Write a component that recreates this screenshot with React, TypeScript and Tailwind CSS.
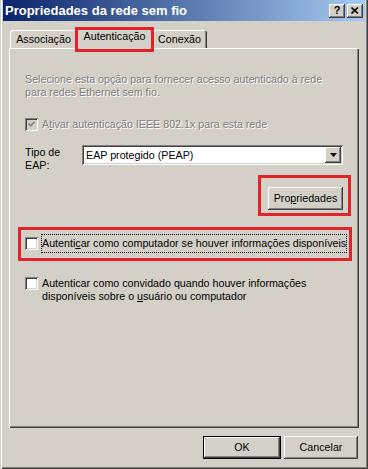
import React from 'react';

const raised =
  'shadow-[inset_-1px_-1px_#404040,inset_1px_1px_#ffffff,inset_-2px_-2px_#808080]';
const sunken =
  'shadow-[inset_1px_1px_#808080,inset_-1px_-1px_#ffffff,inset_2px_2px_#404040,inset_-2px_-2px_#d4d0c8]';
const disabledText = 'text-[#808080] [text-shadow:1px_1px_0_#ffffff]';

const Check: React.FC<{ checked?: boolean; disabled?: boolean }> = ({ checked, disabled }) => (
  <span
    className={`w-[13px] h-[13px] shrink-0 flex items-center justify-center ${sunken} ${
      disabled ? 'bg-[#d4d0c8]' : 'bg-white'
    }`}
  >
    {checked && (
      <svg width="7" height="7" viewBox="0 0 7 7">
        <path d="M0.5 2.5 L2.7 4.8 L6.6 0.8" stroke={disabled ? '#808080' : '#000'} strokeWidth="1.7" fill="none" />
      </svg>
    )}
  </span>
);

const Annotation: React.FC<{ className: string }> = ({ className }) => (
  <span className={`absolute border-[3px] border-[#e1222b] pointer-events-none ${className}`} />
);

export default function App() {
  return (
    <div className="w-[368px] h-[469px] bg-[#d4d0c8] flex flex-col font-['Liberation_Sans',Arial,sans-serif] text-[10.7px] leading-[13px] text-black shadow-[inset_1px_0_#d4d0c8,inset_2px_0_#ffffff,inset_-1px_-1px_#404040,inset_-2px_-2px_#808080] select-none">
      {/* title bar */}
      <div className="mx-[3px] h-[21px] shrink-0 flex items-center pl-[2px] pr-[2px] bg-[linear-gradient(to_right,#0a246a,#a6caf0)]">
        <span className="text-white font-bold text-[13px] leading-[15px]">Propriedades da rede sem fio</span>
        <div className="ml-auto flex gap-[2px]">
          <span className={`w-[16px] h-[14px] bg-[#d4d0c8] ${raised} flex items-center justify-center font-bold text-[11px] leading-none pb-[1px]`}>
            ?
          </span>
          <span className={`w-[16px] h-[14px] bg-[#d4d0c8] ${raised} flex items-center justify-center`}>
            <svg width="8" height="7" viewBox="0 0 8 7">
              <path d="M0.5 0.5 L7 6.5 M7 0.5 L0.5 6.5" stroke="#000" strokeWidth="1.6" />
            </svg>
          </span>
        </div>
      </div>

      {/* tabs */}
      <div className="mt-[7px] ml-[10px] h-[20px] flex items-end relative z-10">
        <div className="w-[67px] h-[18px] flex items-center justify-center rounded-t-[3px] shadow-[inset_1px_1px_#ffffff,inset_-1px_0_#404040,inset_-2px_0_#808080]">
          Associação
        </div>
        <div className="relative -mx-[2px] -mb-[1px] w-[79px] h-[21px] bg-[#d4d0c8] flex items-start pt-[2px] justify-center rounded-t-[3px] shadow-[inset_1px_1px_#ffffff,inset_-1px_0_#404040,inset_-2px_0_#808080] z-10">
          Autenticação
          <Annotation className="-top-[1px] -bottom-[3px] left-0 right-0" />
        </div>
        <div className="w-[55px] h-[18px] flex items-center justify-center rounded-t-[3px] shadow-[inset_1px_1px_#ffffff,inset_-1px_0_#404040,inset_-2px_0_#808080]">
          Conexão
        </div>
      </div>

      {/* panel */}
      <div className="ml-[9px] w-[350px] h-[380px] shrink-0 flex flex-col pl-[16px] pr-[16px] pt-[25px] shadow-[inset_1px_1px_#ffffff,inset_-1px_-1px_#404040,inset_-2px_-2px_#808080]">
        <p className={disabledText}>
          Selecione esta opção para fornecer acesso autenticado à rede
          <br />
          para redes Ethernet sem fio.
        </p>

        <div className="mt-[19px] flex items-center gap-[4px]">
          <Check checked disabled />
          <span className={disabledText}>
            A<span className="underline">t</span>ivar autenticação IEEE 802.1x para esta rede
          </span>
        </div>

        <div className="mt-[14px] flex items-start">
          <span className="w-[57px] pt-[1px]">
            Tipo de
            <br />
            EAP:
          </span>
          <div className={`flex-1 h-[20px] bg-white ${sunken} flex items-center pl-[4px] pr-[2px]`}>
            <span>EAP protegido (PEAP)</span>
            <span className={`ml-auto w-[16px] h-[16px] bg-[#d4d0c8] ${raised} flex items-center justify-center`}>
              <svg width="7" height="4" viewBox="0 0 7 4">
                <path d="M0 0 H7 L3.5 4 Z" fill="#000" />
              </svg>
            </span>
          </div>
        </div>

        <div className="self-end mt-[15px] relative">
          <button className={`w-[75px] h-[23px] bg-[#d4d0c8] ${raised} flex items-center justify-center`}>
            Pro<span className="underline">p</span>riedades
          </button>
          <Annotation className="-left-[10px] -right-[8px] -top-[12px] -bottom-[6px]" />
        </div>

        <div className="mt-[24px] relative flex items-center gap-[3px]">
          <Check />
          <span className="border border-dotted border-black px-0 py-[2px] whitespace-nowrap">
            Autenti<span className="underline">c</span>ar como computador se houver informações disponíveis
          </span>
          <Annotation className="-left-[7px] -right-[9px] -top-[7px] -bottom-[8px]" />
        </div>

        <div className="mt-[24px] flex items-start gap-[4px]">
          <Check />
          <span>
            Autenticar como convidado quando houver informações
            <br />
            disponíveis sobre o <span className="underline">u</span>suário ou computador
          </span>
        </div>
      </div>

      {/* footer */}
      <div className="mt-[8px] flex justify-end gap-[3px] pr-[10px]">
        <button className={`w-[78px] h-[23px] bg-[#d4d0c8] border border-black shadow-[inset_-1px_-1px_#404040,inset_1px_1px_#ffffff,inset_-2px_-2px_#808080] flex items-center justify-center`}>
          OK
        </button>
        <button className={`w-[74px] h-[23px] bg-[#d4d0c8] ${raised} flex items-center justify-center`}>
          Cancelar
        </button>
      </div>
    </div>
  );
}
